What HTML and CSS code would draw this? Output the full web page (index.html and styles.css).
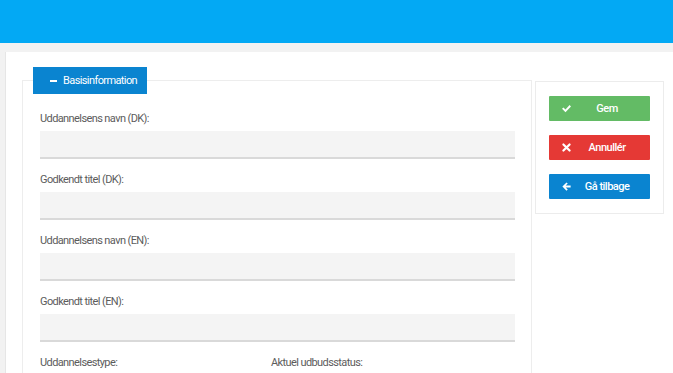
FILE: index.html
```html
<!DOCTYPE html>
<html lang="da">
<head>
    <meta charset="UTF-8">
    <meta name="viewport" content="width=device-width, initial-scale=1.0">
    <title>Uddannelse - Basisinformation</title>
    <link rel="stylesheet" href="styles.css">
</head>
<body>
    <header class="topbar"></header>

    <div class="page">
        <div class="panel">
            <fieldset class="basis">
                <legend class="basis-toggle">
                    <span class="minus"></span>
                    Basisinformation
                </legend>

                <label class="field-label">Uddannelsens navn (DK):</label>
                <input class="field-input" type="text">

                <label class="field-label">Godkendt titel (DK):</label>
                <input class="field-input" type="text">

                <label class="field-label">Uddannelsens navn (EN):</label>
                <input class="field-input" type="text">

                <label class="field-label">Godkendt titel (EN):</label>
                <input class="field-input" type="text">

                <div class="two-cols">
                    <label class="field-label">Uddannelsestype:</label>
                    <label class="field-label">Aktuel udbudsstatus:</label>
                </div>
            </fieldset>

            <!-- Handlinger til højre -->
            <div class="actions">
                <button class="btn btn-save">
                    <svg class="btn-icon" viewBox="0 0 16 16"><path d="M1.5 8.5l2-2 3 3 6-6.5 2 2-8 8.5z" fill="#fff"/></svg>
                    <span class="btn-text">Gem</span>
                </button>
                <button class="btn btn-cancel">
                    <svg class="btn-icon" viewBox="0 0 16 16"><path d="M3.5 3.5l9 9M12.5 3.5l-9 9" stroke="#fff" stroke-width="3.2" stroke-linecap="round"/></svg>
                    <span class="btn-text">Annullér</span>
                </button>
                <button class="btn btn-back">
                    <svg class="btn-icon" viewBox="0 0 16 16"><path d="M2 8l6-6 1.8 1.8-2.9 2.9H14v2.6H6.9l2.9 2.9L8 14z" fill="#fff"/></svg>
                    <span class="btn-text">Gå tilbage</span>
                </button>
            </div>
        </div>
    </div>
</body>
</html>
```

FILE: styles.css
```css
body {
    font-family: 'Roboto', 'Liberation Sans', sans-serif;
    background-color: #f2f2f2;
    color: #555;
    margin: 0;
    padding: 0;
}
.topbar {
    height: 43px;
    background-color: #03a9f4;
}
.page {
    padding: 9px 0 0 5px;
}
.panel {
    background-color: #fff;
    border-left: 1px solid #e6e6e6;
    padding: 15px 9px 0 16px;
    display: flex;
    align-items: flex-start;
    gap: 3px;
}
.basis {
    width: 476px;
    margin: 0;
    padding: 17px 16px 0 17px;
    border: 1px solid #ededed;
    border-bottom: none;
}
.basis-toggle {
    margin-left: -7px;
    height: 27px;
    box-sizing: border-box;
    padding: 0 10px 0 17px;
    background-color: #0a84d0;
    color: #fff;
    font-size: 11px;
    letter-spacing: -0.6px;
    line-height: 27px;
    display: flex;
    align-items: center;
    gap: 6px;
}
.minus {
    width: 7px;
    height: 2px;
    background-color: #fff;
}
.field-label {
    display: block;
    font-size: 11px;
    letter-spacing: -0.6px;
    line-height: 16px;
    margin-bottom: 4px;
    color: #5c5c5c;
}
.field-input {
    display: block;
    width: 100%;
    height: 28px;
    box-sizing: border-box;
    margin: 0 0 13px 0;
    background-color: #f4f4f4;
    border: none;
    border-bottom: 2px solid #d9d9d9;
}
.two-cols {
    display: grid;
    grid-template-columns: 231px 1fr;
}
.actions {
    width: 101px;
    margin-top: 14px;
    padding: 14px 13px 14px 13px;
    border: 1px solid #ececec;
    display: flex;
    flex-direction: column;
    gap: 14px;
}
.btn {
    height: 25px;
    border: none;
    border-radius: 1px;
    padding: 0 8px 0 12px;
    display: flex;
    align-items: center;
    color: #fff;
    font-family: 'Roboto', sans-serif;
    font-size: 11px;
    font-weight: 500;
    letter-spacing: -0.5px;
    cursor: pointer;
}
.btn-icon {
    width: 11px;
    height: 11px;
}
.btn-text {
    flex: 1;
    text-align: center;
}
.btn-save {
    background-color: #63bb65;
}
.btn-cancel {
    background-color: #e53935;
}
.btn-back {
    background-color: #0a84d0;
}
```
